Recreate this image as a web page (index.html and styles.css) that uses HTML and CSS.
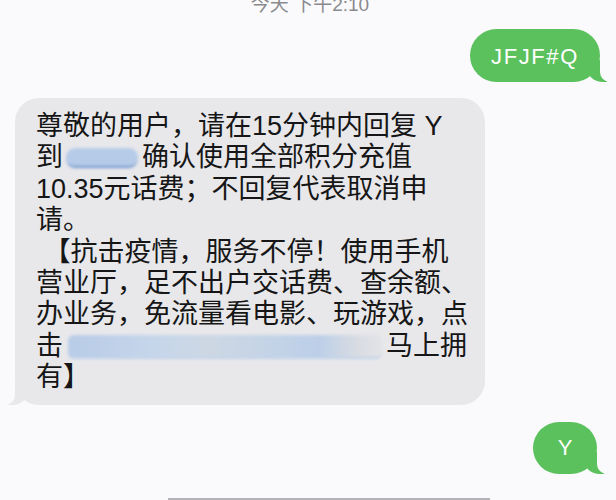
FILE: index.html
```html
<!DOCTYPE html>
<html lang="zh">
<head>
<meta charset="utf-8">
<link rel="stylesheet" href="styles.css">
</head>
<body>
<div class="screen">
  <div class="time"><span>今天 下午2:10</span></div>
  <div class="row row-right row-first">
    <div class="bubble sent sent-wide">JFJF#Q</div>
  </div>
  <div class="row row-left">
    <div class="bubble received">
      <div class="line">尊敬的用户，请在15分钟内回复 Y</div>
      <div class="line">到<span class="blur blur-num"></span>确认使用全部积分充值</div>
      <div class="line">10.35元话费；不回复代表取消申</div>
      <div class="line">请。</div>
      <div class="line"> 【抗击疫情，服务不停！使用手机</div>
      <div class="line">营业厅，足不出户交话费、查余额、</div>
      <div class="line">办业务，免流量看电影、玩游戏，点</div>
      <div class="line">击<span class="blur blur-link"></span>马上拥</div>
      <div class="line">有】</div>
    </div>
  </div>
  <div class="row row-right row-y">
    <div class="bubble sent sent-small">Y</div>
  </div>
  <div class="bottom-bar"></div>
</div>
</body>
</html>
```

FILE: styles.css
```css
html, body {
  margin: 0;
  padding: 0;
  background: #fafafc;
}

.screen {
  width: 616px;
  height: 500px;
  overflow: hidden;
  display: flex;
  flex-direction: column;
  font-family: "Liberation Sans", "Noto Sans CJK SC", sans-serif;
}

.time {
  height: 14px;
  overflow: hidden;
  display: flex;
  justify-content: center;
  align-items: flex-end;
  font-size: 19px;
  line-height: 19px;
  color: #8a8a8e;
  padding-left: 4px;
}

.row {
  display: flex;
}

.row-right {
  justify-content: flex-end;
}

.row-first {
  margin-top: 15px;
  padding-right: 16px;
}

.row-left {
  margin-top: 16px;
  padding-left: 15px;
}

.row-y {
  margin-top: 17px;
  padding-right: 19px;
}

.bubble {
  position: relative;
}

.sent {
  background: #5bc15d;
  color: #ffffff;
  display: flex;
  align-items: center;
  justify-content: center;
  font-size: 22px;
}

.sent::before,
.received::before {
  content: "";
  position: absolute;
  bottom: 0;
  width: 20px;
  height: 22px;
}

.sent::after,
.received::after {
  content: "";
  position: absolute;
  bottom: 0;
  width: 26px;
  height: 22px;
  background: #fafafc;
}

.sent::before {
  right: -7px;
  background: #5bc15d;
  border-bottom-left-radius: 16px 14px;
}

.sent::after {
  right: -26px;
  border-bottom-left-radius: 10px;
}

.received::before {
  left: -7px;
  background: #e8e8eb;
  border-bottom-right-radius: 16px 14px;
}

.received::after {
  left: -26px;
  border-bottom-right-radius: 10px;
}

.sent-wide {
  width: 130px;
  height: 53px;
  border-radius: 27px;
  letter-spacing: 1.6px;
  padding-top: 2px;
  box-sizing: border-box;
}

.sent-small {
  width: 64px;
  height: 52px;
  border-radius: 26px;
}

.received {
  width: 470px;
  height: 307px;
  box-sizing: border-box;
  background: #e8e8eb;
  border-radius: 24px;
  padding: 13px 10px 0 21px;
  color: #161616;
  font-size: 27px;
  line-height: 31.4px;
}

.line {
  white-space: pre;
  height: 31.4px;
}

.blur {
  display: inline-block;
  vertical-align: middle;
  filter: blur(1.5px);
}

.blur-num {
  width: 72px;
  height: 18px;
  margin: 0 4px 0 3px;
  background: #b6cbe8;
  border-radius: 9px;
  border-bottom: 2px solid #6f95cc;
  position: relative;
  top: -1px;
}

.blur-link {
  width: 314px;
  height: 22px;
  margin: 0 4px 0 5px;
  border-radius: 6px;
  background: linear-gradient(90deg, #b8cce7 0%, #c7d6ea 30%, #cdd7e3 45%, #c6d4e6 60%, #bccfe8 80%, #d8dce2 92%, #e2e3e7 100%);
  border-bottom: 2px solid #c0d1e8;
  position: relative;
  top: -1px;
}

.bottom-bar {
  margin-top: 24px;
  margin-left: 168px;
  width: 322px;
  height: 2px;
  background: #b4b4b8;
}
```
